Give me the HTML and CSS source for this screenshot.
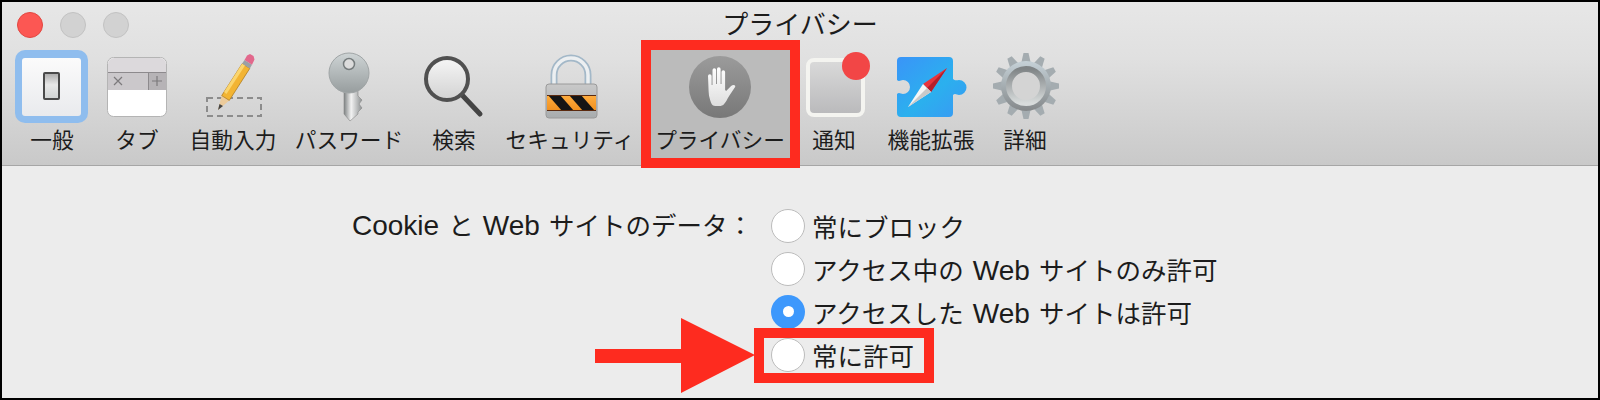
FILE: index.html
```html
<!DOCTYPE html>
<html lang="ja">
<head>
<meta charset="utf-8">
<title>プライバシー</title>
<link rel="stylesheet" href="styles.css">
</head>
<body>
<div class="window">
  <header class="toolbar">
    <div class="titlebar">
      <div class="lights"><span class="light close"></span><span class="light"></span><span class="light"></span></div>
      <div class="title">プライバシー</div>
      <div></div>
    </div>
    <nav class="tabs">
      <div class="tab">
        <svg class="icon" viewBox="14 48 76 76">
          <defs>
            <linearGradient id="gen" x1="0" y1="0" x2="0" y2="1"><stop offset="0" stop-color="#fbfbfb"/><stop offset="1" stop-color="#e9eaed"/></linearGradient>
            <linearGradient id="sw" x1="0" y1="0" x2="0" y2="1"><stop offset="0" stop-color="#a9a9a9"/><stop offset=".45" stop-color="#e8e8e8"/><stop offset="1" stop-color="#d0d3d3"/></linearGradient>
          </defs>
          <rect x="15" y="50" width="73" height="73" rx="10" fill="#8fbdee"/>
          <rect x="22" y="58" width="59" height="58" rx="3" fill="url(#gen)"/>
          <rect x="44" y="73" width="15" height="26" rx="1" fill="url(#sw)" stroke="#4a4a4a" stroke-width="2"/>
        </svg>
        <span class="tab-label">一般</span>
      </div>
      <div class="tab">
        <svg class="icon" viewBox="99 48 76 76">
          <rect x="107.500" y="57.500" width="59" height="59" rx="6" fill="#fff" stroke="#b4b4b4"/>
          <path d="M108 72V64a6 6 0 0 1 6-6h46a6 6 0 0 1 6 6v8z" fill="#dcd9dc"/>
          <rect x="108" y="72" width="58" height="18" fill="#cbc8cb"/>
          <rect x="148" y="72" width="18" height="18" fill="#b6b3b6"/>
          <path d="M108 72.500H166M148.500 72V90" stroke="#8d8a8d" fill="none"/>
          <path d="M114 77l8 8M122 77l-8 8M157 76v10M152 81h10" stroke="#7c7a7c" stroke-width="1.200" fill="none"/>
        </svg>
        <span class="tab-label">タブ</span>
      </div>
      <div class="tab">
        <svg class="icon" viewBox="195 48 76 76">
          <rect x="207" y="98" width="54" height="18" fill="none" stroke="#8c8c8c" stroke-width="2" stroke-dasharray="6 4"/>
          <polygon points="218,110 221.700,95.600 229.300,100.400" fill="#eccb9b"/>
          <polygon points="218,110 219.500,104 223,106" fill="#444"/>
          <polygon points="221.700,95.600 242.200,63.600 249.800,68.400 229.300,100.400" fill="#f2b433" stroke="#a8761c" stroke-width=".7"/>
          <polygon points="224,92 242.200,63.600 245,65.400 226.500,94" fill="#fbd56e"/>
          <polygon points="242.200,63.600 244.500,60 252,64.800 249.800,68.400" fill="#9aa0a5"/>
          <polygon points="244.500,60 247,55.500 250,54 253.500,56 254.500,59.500 252,64.800" fill="#e2688c"/>
        </svg>
        <span class="tab-label">自動入力</span>
      </div>
      <div class="tab">
        <svg class="icon" viewBox="311 48 76 76">
          <defs>
            <linearGradient id="key" x1="0" y1="0" x2="0" y2="1"><stop offset="0" stop-color="#ced4d5"/><stop offset="1" stop-color="#979d9e"/></linearGradient>
            <linearGradient id="keyb" x1="0" y1="0" x2="1" y2="0"><stop offset="0" stop-color="#7f8384"/><stop offset=".4" stop-color="#f2f2f2"/><stop offset="1" stop-color="#8d9192"/></linearGradient>
          </defs>
          <path d="M344 90H358V96L362 100 359 104 362 108 358 112V114L350 121 344 114z" fill="url(#keyb)" stroke="#888" stroke-width=".6"/>
          <circle cx="349" cy="73" r="20" fill="url(#key)" stroke="#a0a5a6"/>
          <circle cx="349" cy="64" r="5.500" fill="#dcdcdc" stroke="#767c7d" stroke-width="1.500"/>
        </svg>
        <span class="tab-label">パスワード</span>
      </div>
      <div class="tab">
        <svg class="icon" viewBox="416 48 76 76">
          <defs>
            <linearGradient id="lens" x1="0" y1="0" x2="0" y2="1"><stop offset="0" stop-color="#f6f6f6"/><stop offset="1" stop-color="#d2d2d2"/></linearGradient>
          </defs>
          <path d="M463 96L480 114" stroke="#444" stroke-width="5" stroke-linecap="round" fill="none"/>
          <circle cx="447" cy="79" r="21" fill="url(#lens)" stroke="#505050" stroke-width="4"/>
        </svg>
        <span class="tab-label">検索</span>
      </div>
      <div class="tab">
        <svg class="icon" viewBox="532 48 76 76">
          <defs>
            <linearGradient id="band" x1="0" y1="0" x2="0" y2="1"><stop offset="0" stop-color="#ffae40"/><stop offset="1" stop-color="#f08f1e"/></linearGradient>
            <linearGradient id="body" x1="0" y1="0" x2="0" y2="1"><stop offset="0" stop-color="#c9c9c9"/><stop offset="1" stop-color="#a8acae"/></linearGradient>
            <clipPath id="bandclip"><rect x="547" y="95" width="49" height="16"/></clipPath>
          </defs>
          <path d="M554 86V75a17 17 0 0 1 34 0V86" fill="none" stroke="#a3b8c8" stroke-width="7"/>
          <path d="M554 86V75a17 17 0 0 1 34 0V86" fill="none" stroke="#eceff1" stroke-width="3.500"/>
          <rect x="546" y="84" width="51" height="34" rx="3" fill="url(#body)" stroke="#9a9a9a"/>
          <rect x="547" y="95" width="49" height="16" fill="url(#band)"/>
          <g clip-path="url(#bandclip)" fill="#151515">
            <polygon points="548,95 560,95 574,111 562,111"/>
            <polygon points="569,95 581,95 595,111 583,111"/>
          </g>
          <path d="M547 95.500H596M547 110.500H596" stroke="#5a2a10" fill="none"/>
        </svg>
        <span class="tab-label">セキュリティ</span>
      </div>
      <div class="tab tab-selected">
        <div class="mark-tab"></div>
        <svg class="icon" viewBox="682 48 76 76">
          <defs>
            <linearGradient id="stop" x1="0" y1="0" x2="0" y2="1"><stop offset="0" stop-color="#9b9b9b"/><stop offset="1" stop-color="#787878"/></linearGradient>
            <linearGradient id="palm" x1="0" y1="0" x2="0" y2="1"><stop offset="0" stop-color="#fff"/><stop offset="1" stop-color="#dedede"/></linearGradient>
          </defs>
          <circle cx="720" cy="87" r="31" fill="url(#stop)"/>
          <path d="M708 76a1.800 1.800 0 0 1 3.600 0V85h.9V70a1.800 1.800 0 0 1 3.600 0V84h.9V69a1.800 1.800 0 0 1 3.600 0V84h.9V72a1.800 1.800 0 0 1 3.600 0V90l1 1 5-5c2-2 5-1 4 1l-6 9c-2 3-3 6-5 8-1 1.500-3 2-5 2h-4c-3 0-4-3-5-6-1-3-1.500-6-1.500-9z" fill="url(#palm)"/>
        </svg>
        <span class="tab-label">プライバシー</span>
      </div>
      <div class="tab">
        <svg class="icon" viewBox="796 48 76 76">
          <defs>
            <linearGradient id="note" x1="0" y1="0" x2="0" y2="1"><stop offset="0" stop-color="#dadada"/><stop offset="1" stop-color="#b9b9bb"/></linearGradient>
          </defs>
          <rect x="808" y="60" width="55" height="55" rx="6" fill="url(#note)" stroke="#f4f4f0" stroke-width="4"/>
          <circle cx="856" cy="66" r="14" fill="#f24646"/>
        </svg>
        <span class="tab-label">通知</span>
      </div>
      <div class="tab">
        <svg class="icon" viewBox="893 48 76 76">
          <defs>
            <linearGradient id="puz" x1="0" y1="0" x2="1" y2="1"><stop offset="0" stop-color="#3a94f8"/><stop offset=".55" stop-color="#2bb0ee"/><stop offset="1" stop-color="#3a98f4"/></linearGradient>
          </defs>
          <path d="M901 57H949a4 4 0 0 1 4 4V79c2 2 4 1 6 1a7.500 7.500 0 0 1 0 15c-2 0-4-2-6 0V113a4 4 0 0 1-4 4H901a4 4 0 0 1-4-4V94c2-2 4 0 6 0a5.500 5.500 0 0 0 0-14c-2 0-4 2-6 0V61a4 4 0 0 1 4-4z" fill="url(#puz)"/>
          <polygon points="947,68 923,84 931,92" fill="#e8343c"/>
          <polygon points="947,68 931,92 927,88" fill="#b51e2a"/>
          <polygon points="908,107 923,84 931,92" fill="#f6f6f6"/>
          <polygon points="908,107 927,88 931,92" fill="#c9c9c9"/>
        </svg>
        <span class="tab-label">機能拡張</span>
      </div>
      <div class="tab">
        <svg class="icon" viewBox="987 48 76 76">
          <defs>
            <linearGradient id="gear" x1="0" y1="0" x2="0" y2="1"><stop offset="0" stop-color="#c6d2d8"/><stop offset="1" stop-color="#84888a"/></linearGradient>
            <linearGradient id="gearin" x1="0" y1="0" x2="0" y2="1"><stop offset="0" stop-color="#7f8486"/><stop offset="1" stop-color="#d8dcdc"/></linearGradient>
            <polygon id="tooth" points="1023.500,53 1028.500,53 1031,64 1021,64" />
          </defs>
          <g fill="#a4acb0">
            <use href="#tooth"/>
            <use href="#tooth" transform="rotate(30 1026 86)"/>
            <use href="#tooth" transform="rotate(60 1026 86)"/>
            <use href="#tooth" transform="rotate(90 1026 86)"/>
            <use href="#tooth" transform="rotate(120 1026 86)"/>
            <use href="#tooth" transform="rotate(150 1026 86)"/>
            <use href="#tooth" transform="rotate(180 1026 86)"/>
            <use href="#tooth" transform="rotate(210 1026 86)"/>
            <use href="#tooth" transform="rotate(240 1026 86)"/>
            <use href="#tooth" transform="rotate(270 1026 86)"/>
            <use href="#tooth" transform="rotate(300 1026 86)"/>
            <use href="#tooth" transform="rotate(330 1026 86)"/>
          </g>
          <circle cx="1026" cy="86" r="25" fill="url(#gear)"/>
          <circle cx="1026" cy="86" r="17" fill="#d4d4d4" stroke="url(#gearin)" stroke-width="6"/>
        </svg>
        <span class="tab-label">詳細</span>
      </div>
    </nav>
  </header>
  <main class="pane">
    <div class="field-label"><span class="latin">Cookie</span> と <span class="latin">Web</span> サイトのデータ：</div>
    <div class="options">
      <div class="option"><span class="radio"></span><span>常にブロック</span></div>
      <div class="option"><span class="radio"></span><span>アクセス中の <span class="latin">Web</span> サイトのみ許可</span></div>
      <div class="option"><span class="radio radio-on"></span><span>アクセスした <span class="latin">Web</span> サイトは許可</span></div>
      <div class="option">
        <span class="radio"></span><span>常に許可</span>
        <div class="mark-option"></div>
        <svg class="mark-arrow" viewBox="0 0 160 75"><polygon points="0,31 86,31 86,0 160,37 86,75 86,45 0,45"/></svg>
      </div>
    </div>
  </main>
</div>
</body>
</html>
```

FILE: styles.css
```css
* { box-sizing: border-box; }
html, body { margin: 0; padding: 0; }
body {
  font-family: "Liberation Sans", "Noto Sans CJK JP", sans-serif;
  color: #1c1c1c;
}
.window {
  width: 1600px;
  height: 400px;
  border: 2px solid #000;
  background: #ececec;
  overflow: hidden;
}
.toolbar {
  height: 164px;
  background: linear-gradient(#e7e7e7, #e0e0e0 35%, #c9c9c9);
  border-bottom: 1px solid #a6a6a6;
}
.titlebar {
  height: 46px;
  display: grid;
  grid-template-columns: 1fr auto 1fr;
  align-items: center;
}
.lights { display: flex; gap: 17px; padding-left: 15px; }
.light {
  width: 26px;
  height: 26px;
  border-radius: 50%;
  background: #d2d2d2;
  border: 1px solid #c2c2c2;
}
.light.close { background: #fc5753; border-color: #e2463f; }
.title { font-size: 26px; line-height: 44px; }
.tabs {
  display: grid;
  grid-template-columns: 84px 86px 106px 126px 84px 148px 152px 76px 118px 70px;
  padding-left: 8px;
}
.tab {
  position: relative;
  display: flex;
  flex-direction: column;
  align-items: center;
}
.icon {
  position: relative;
  z-index: 1;
  display: block;
  width: 76px;
  height: 76px;
}
.tab-label {
  position: relative;
  z-index: 1;
  margin-top: 3px;
  font-size: 21.700px;
  line-height: 28px;
  white-space: nowrap;
}
.mark-tab {
  position: absolute;
  left: -3px;
  top: -8px;
  width: 159px;
  height: 128px;
  background: #bbb;
  border: 10px solid #fe2b1f;
}
.pane {
  display: flex;
  padding: 38px 0 0 350px;
  font-size: 25.500px;
  word-spacing: 2px;
}
.latin { font-size: 28px; }
.field-label {
  width: 419px;
  height: 43px;
  padding-right: 19px;
  line-height: 43px;
  text-align: right;
  white-space: nowrap;
}
.options { display: flex; flex-direction: column; }
.option {
  position: relative;
  display: flex;
  align-items: center;
  gap: 7px;
  height: 43px;
  white-space: nowrap;
}
.radio {
  width: 34px;
  height: 34px;
  border-radius: 50%;
  background: #fff;
  border: 1.500px solid #bcbcbc;
  flex: none;
}
.radio-on {
  display: flex;
  align-items: center;
  justify-content: center;
  background: #3d98fc;
  border: 0;
}
.radio-on::after {
  content: "";
  width: 11px;
  height: 11px;
  border-radius: 50%;
  background: #fff;
}
.mark-option {
  position: absolute;
  left: -17px;
  top: -5px;
  width: 180px;
  height: 55px;
  border: 10px solid #fe2b1f;
}
.mark-arrow {
  position: absolute;
  left: -176px;
  top: -15px;
  width: 160px;
  height: 75px;
  fill: #fe2b1f;
}
```
